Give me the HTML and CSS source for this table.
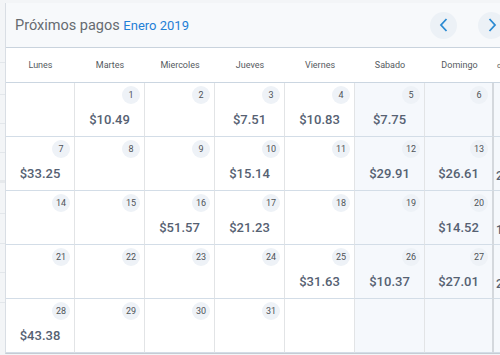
FILE: index.html
```html
<!DOCTYPE html>
<html lang="es">
<head>
  <meta charset="UTF-8">
  <title>Próximos pagos</title>
  <link rel="stylesheet" href="styles.css">
</head>
<body>
  <div class="page">
    <div class="side-list">
      <div class="side-row r62"></div>
      <div class="side-row r32"></div>
      <div class="side-row r29"></div>
      <div class="side-row r29"></div>
      <div class="side-row r30 dark"></div>
      <div class="side-row r31"></div>
      <div class="side-row r30"></div>
      <div class="side-row r29"></div>
      <div class="side-row r30"></div>
    </div>

    <div class="card">
      <div class="card-header">
        <div class="title">Próximos pagos <span class="month">Enero 2019</span></div>
        <div class="nav">
          <div class="nav-btn">
            <svg width="12" height="16" viewBox="0 0 12 16"><path d="M8.5 2 L3 8 L8.5 14" fill="none" stroke="#2b8ad2" stroke-width="1.8"/></svg>
          </div>
          <div class="nav-btn">
            <svg width="12" height="16" viewBox="0 0 12 16"><path d="M3.5 2 L9 8 L3.5 14" fill="none" stroke="#2b8ad2" stroke-width="1.8"/></svg>
          </div>
        </div>
      </div>

      <div class="weekdays">
        <div class="wd">Lunes</div>
        <div class="wd">Martes</div>
        <div class="wd">Miercoles</div>
        <div class="wd">Jueves</div>
        <div class="wd">Viernes</div>
        <div class="wd">Sabado</div>
        <div class="wd">Domingo</div>
        <div class="wd ghost">d</div>
      </div>

      <div class="days">
        <!-- week 1 -->
        <div class="day empty"></div>
        <div class="day"><span class="num">1</span><span class="amt">$10.49</span></div>
        <div class="day"><span class="num">2</span></div>
        <div class="day"><span class="num">3</span><span class="amt">$7.51</span></div>
        <div class="day"><span class="num">4</span><span class="amt">$10.83</span></div>
        <div class="day weekend"><span class="num">5</span><span class="amt">$7.75</span></div>
        <div class="day weekend"><span class="num">6</span></div>
        <div class="day ghost"></div>
        <!-- week 2 -->
        <div class="day"><span class="num">7</span><span class="amt">$33.25</span></div>
        <div class="day"><span class="num">8</span></div>
        <div class="day"><span class="num">9</span></div>
        <div class="day"><span class="num">10</span><span class="amt">$15.14</span></div>
        <div class="day"><span class="num">11</span></div>
        <div class="day weekend"><span class="num">12</span><span class="amt">$29.91</span></div>
        <div class="day weekend"><span class="num">13</span><span class="amt">$26.61</span></div>
        <div class="day ghost"><span class="amt">2</span></div>
        <!-- week 3 -->
        <div class="day"><span class="num">14</span></div>
        <div class="day"><span class="num">15</span></div>
        <div class="day"><span class="num">16</span><span class="amt">$51.57</span></div>
        <div class="day"><span class="num">17</span><span class="amt">$21.23</span></div>
        <div class="day"><span class="num">18</span></div>
        <div class="day weekend"><span class="num">19</span></div>
        <div class="day weekend"><span class="num">20</span><span class="amt">$14.52</span></div>
        <div class="day ghost"><span class="amt">1</span></div>
        <!-- week 4 -->
        <div class="day"><span class="num">21</span></div>
        <div class="day"><span class="num">22</span></div>
        <div class="day"><span class="num">23</span></div>
        <div class="day"><span class="num">24</span></div>
        <div class="day"><span class="num">25</span><span class="amt">$31.63</span></div>
        <div class="day weekend"><span class="num">26</span><span class="amt">$10.37</span></div>
        <div class="day weekend"><span class="num">27</span><span class="amt">$27.01</span></div>
        <div class="day ghost"><span class="amt">2</span></div>
        <!-- week 5 -->
        <div class="day"><span class="num">28</span><span class="amt">$43.38</span></div>
        <div class="day"><span class="num">29</span></div>
        <div class="day"><span class="num">30</span></div>
        <div class="day"><span class="num">31</span></div>
        <div class="day empty"></div>
        <div class="day weekend empty"></div>
        <div class="day weekend empty"></div>
        <div class="day ghost"></div>
      </div>
    </div>
  </div>
</body>
</html>
```

FILE: styles.css
```css
body {
  margin: 0;
  background-color: #f3f5f7;
  font-family: Roboto, 'Liberation Sans', sans-serif;
  overflow: hidden;
}

.page {
  display: flex;
  height: 355px;
  padding-top: 3px;
  box-sizing: border-box;
}

.side-list {
  width: 5px;
  flex-shrink: 0;
  display: flex;
  flex-direction: column;
  margin-top: -3px;
}

.side-row {
  border-bottom: 1px solid #e3e7eb;
  box-sizing: border-box;
}

.side-row.dark {
  border-bottom: 3px solid #e6e9ec;
}

.r62 { height: 63px; }
.r32 { height: 32px; }
.r29 { height: 29px; }
.r30 { height: 30px; }
.r31 { height: 31px; }

.card {
  flex: 1;
  height: 350px;
  background: #ffffff;
  border-left: 1px solid #d9dee4;
  border-bottom: 1px solid #c6ccd4;
  overflow: hidden;
}

.card-header {
  height: 44px;
  background: #f7f9fb;
  border-bottom: 1px solid #c9d3dd;
  display: flex;
  align-items: center;
  justify-content: space-between;
  padding-left: 9px;
}

.title {
  font-size: 14.5px;
  color: #666b70;
}

.month {
  font-size: 13px;
  color: #1f80d6;
}

.nav {
  display: flex;
  gap: 21px;
  margin-right: -5px;
}

.nav-btn {
  width: 27px;
  height: 27px;
  border-radius: 50%;
  background: #ecf1f6;
  display: flex;
  align-items: center;
  justify-content: center;
}

.weekdays, .days {
  display: grid;
  grid-template-columns: 69px repeat(5, 70px) 69px 7px;
}

.weekdays {
  height: 34px;
  border-bottom: 1px solid #cbd6e1;
}

.wd {
  font-size: 9px;
  color: #555a60;
  display: flex;
  align-items: center;
  justify-content: center;
}

.wd.ghost {
  justify-content: flex-start;
  padding-left: 3px;
  font-size: 8px;
}

.days {
  grid-auto-rows: 54px;
}

.day {
  border-right: 1px solid #e2e4e6;
  border-bottom: 1px solid #d3dde7;
  box-sizing: border-box;
  display: flex;
  flex-direction: column;
  align-items: center;
  padding-top: 3px;
}

.day.weekend {
  background: #f5f8fc;
}

.day:nth-child(8n+7) {
  border-right: 2px solid #d4d8dd;
}

.day.ghost {
  border-right: none;
  background: #f5f8fc;
  align-items: flex-start;
  padding-left: 2px;
}

.num {
  align-self: flex-end;
  margin-right: 4px;
  width: 18px;
  height: 18px;
  border-radius: 50%;
  background: #eef2f7;
  font-size: 9px;
  color: #4e5358;
  display: flex;
  align-items: center;
  justify-content: center;
}

.amt {
  margin-top: 8px;
  font-size: 13px;
  font-weight: 500;
  color: #566172;
}

.day.ghost .amt {
  margin-top: 29px;
  font-size: 12px;
}
```
